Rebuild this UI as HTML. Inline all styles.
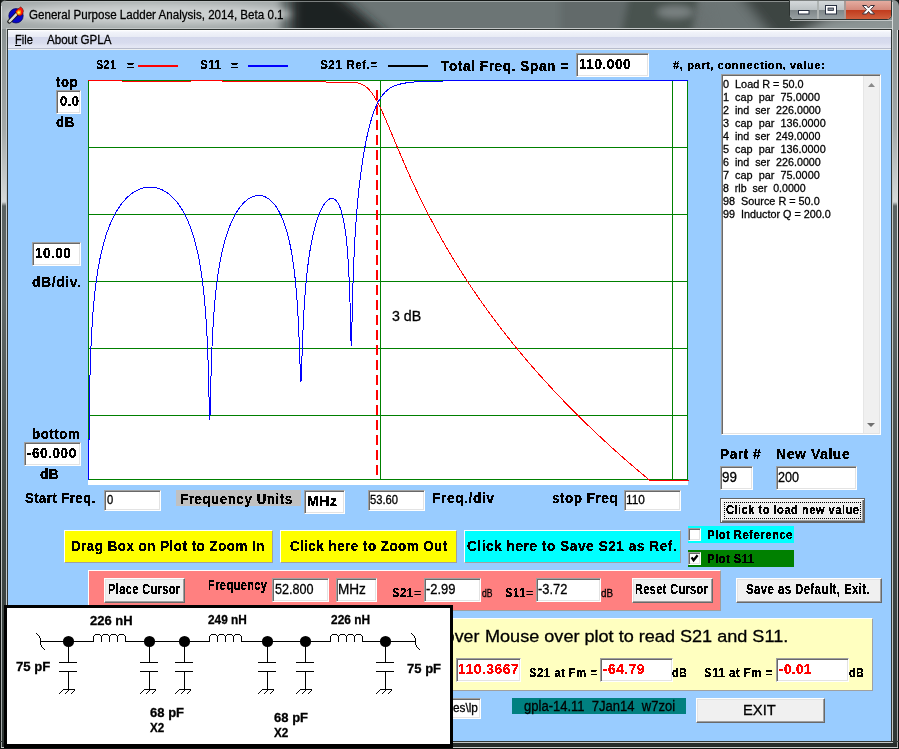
<!DOCTYPE html><html><head><meta charset="utf-8"><style>
html,body{margin:0;padding:0;}
body{width:899px;height:749px;position:relative;overflow:hidden;background:#1c2220;font-family:"Liberation Sans",sans-serif;}
.r{position:absolute;}
.t{position:absolute;white-space:pre;line-height:1;transform-origin:0 0;}
svg{position:absolute;left:0;top:0;}
.t{filter:url(#crisp);}
.t.rg{filter:none;-webkit-text-stroke:0.3px currentColor;}
</style></head><body>
<svg width="0" height="0" style="position:absolute"><filter id="crisp" x="-10%" y="-10%" width="120%" height="120%"><feComponentTransfer><feFuncA type="discrete" tableValues="0 1 1"/></feComponentTransfer></filter><filter id="crispr" x="-10%" y="-10%" width="120%" height="120%"><feComponentTransfer><feFuncA type="discrete" tableValues="0 1"/></feComponentTransfer></filter></svg>
<div class="r" style="left:0px;top:0px;width:899px;height:749px;background:linear-gradient(90deg,#3a4240 0px,#5a6262 20px,#6a7272 100%);border-radius:7px 7px 0 0;"></div>
<svg width="899" height="29" style="left:0;top:0">
<defs><filter id="gb" x="-20%" y="-100%" width="140%" height="300%"><feGaussianBlur stdDeviation="3.5"/></filter>
<filter id="gb2" x="-50%" y="-100%" width="200%" height="300%"><feGaussianBlur stdDeviation="6"/></filter>
<clipPath id="tc"><path d="M7 0 H892 A7 7 0 0 1 899 7 V29 H0 V7 A7 7 0 0 1 7 0 Z"/></clipPath></defs>
<g clip-path="url(#tc)">
<rect x="0" y="0" width="899" height="29" fill="#6a7272"/>
<g filter="url(#gb)">
<rect x="-20" y="-10" width="300" height="50" fill="#a4aaaa"/>
<ellipse cx="150" cy="14" rx="148" ry="10" fill="#ccd0d0"/>

<polygon points="328,-10 560,-10 560,40 392,40" fill="#6c7474"/>
<rect x="560" y="-10" width="70" height="50" fill="#626a6a"/>
<polygon points="630,-10 700,-10 690,40 620,40" fill="#4a5250"/>
<ellipse cx="675" cy="12" rx="18" ry="6" fill="#7a8282"/>
</g>
<g filter="url(#gb2)">
<polygon points="292,-10 332,-10 392,40 292,40" fill="#1e2420"/>
<polygon points="700,-10 735,-10 775,40 715,40" fill="#6c7474"/>
<polygon points="735,-10 899,-10 899,40 775,40" fill="#3c4442"/>
<polygon points="830,18 899,10 899,40 790,40" fill="#8e9696"/>
</g>
<rect x="0" y="0" width="899" height="1" fill="#141816"/>
<rect x="6" y="1" width="887" height="1" fill="#c8cccc" opacity="0.55"/>
</g>
</svg>
<div class="r" style="left:0px;top:0px;width:1px;height:749px;background:#101412;"></div>
<div class="r" style="left:1px;top:6px;width:1px;height:743px;background:linear-gradient(#e0e4e4,#d0d4d4 60%,#a0a4a4);"></div>
<div class="r" style="left:2px;top:29px;width:4px;height:714px;background:linear-gradient(#8a9292 0px,#a4aaaa 100px,#d4d8d8 171px,#d0d4d4 173px,#5a6262 177px,#606868 270px,#4c5452 400px,#2e3634 714px);"></div>
<div class="r" style="left:6px;top:28px;width:1px;height:714px;background:#c4c8c8;"></div>
<div class="r" style="left:7px;top:29px;width:1px;height:713px;background:#303634;"></div>
<div class="r" style="left:891px;top:29px;width:1px;height:713px;background:#303634;"></div>
<div class="r" style="left:892px;top:28px;width:1px;height:715px;background:#c4c8c8;"></div>
<div class="r" style="left:893px;top:29px;width:4px;height:714px;background:linear-gradient(#8a9292 0px,#a4aaaa 100px,#d4d8d8 171px,#d0d4d4 173px,#5a6262 177px,#606868 270px,#4c5452 400px,#2e3634 714px);"></div>
<div class="r" style="left:897px;top:6px;width:1px;height:743px;background:linear-gradient(#e0e4e4,#d0d4d4 60%,#a0a4a4);"></div>
<div class="r" style="left:898px;top:0px;width:1px;height:749px;background:#101412;"></div>
<div class="r" style="left:0px;top:741px;width:899px;height:1px;background:#303634;"></div>
<div class="r" style="left:6px;top:742px;width:887px;height:1px;background:#c4c8c8;"></div>
<div class="r" style="left:2px;top:743px;width:895px;height:4px;background:#262c2a;"></div>
<div class="r" style="left:1px;top:747px;width:897px;height:1px;background:#c8cccc;"></div>
<div class="r" style="left:0px;top:748px;width:899px;height:1px;background:#101412;"></div>
<div class="r" style="left:7px;top:28px;width:885px;height:1px;background:#c4c8c8;"></div>
<div class="r" style="left:8px;top:29px;width:883px;height:1px;background:#303634;"></div>
<svg width="899" height="30" style="left:0;top:0">
<circle cx="16" cy="15.8" r="7.2" fill="#0808c8" stroke="#000050" stroke-width="0.7"/>
<line x1="9.3" y1="21.6" x2="16.5" y2="14.2" stroke="#181818" stroke-width="4.2" stroke-linecap="round"/>
<line x1="9.6" y1="21.3" x2="16.5" y2="14.2" stroke="#d8d8d0" stroke-width="2.4" stroke-linecap="round"/>
<path d="M15.5 11.5 L17.5 9 L19.5 8 L20.5 6.8 L22.5 8.5 L23.5 11 L22.5 14.5 L20 16 L17.5 15 Z" fill="#ff1808" stroke="#401010" stroke-width="0.5"/>
<path d="M16.5 12 L18.5 10 L21 10.5 L21 13.5 L19 15 L17 14 Z" fill="#ff9000"/>
<path d="M17.3 12.5 L19 11 L20 12.5 L19 14 Z" fill="#ffff40"/>
</svg>
<div class="t rg" style="left:29.45px;top:8.00px;font-size:13.25px;font-weight:normal;color:#000;transform:scaleX(0.8749);">General Purpose Ladder Analysis, 2014, Beta 0.1</div>
<svg width="899" height="30" style="left:0;top:0">
<defs>
<linearGradient id="bg1" x1="0" y1="0" x2="0" y2="1"><stop offset="0" stop-color="#d4d8da"/><stop offset="0.48" stop-color="#bcc2c4"/><stop offset="0.5" stop-color="#7e8688"/><stop offset="1" stop-color="#98a0a2"/></linearGradient>
<linearGradient id="bg2" x1="0" y1="0" x2="0" y2="1"><stop offset="0" stop-color="#e4aca0"/><stop offset="0.48" stop-color="#d48a7c"/><stop offset="0.5" stop-color="#c03a1c"/><stop offset="1" stop-color="#d0603e"/></linearGradient>
</defs>
<path d="M892 0 H893 A6 6 0 0 1 899 6 V30 H892 Z" fill="#8e9696"/>
<rect x="892" y="2" width="1" height="28" fill="#d8dcdc"/>
<path d="M789.5 0.5 V15 A4.5 4.5 0 0 0 794 19.5 H887 A4.5 4.5 0 0 0 891.5 15 V0.5" fill="#e8ecec" stroke="#2c3230" stroke-width="1"/>
<path d="M790 1 V15 A4 4 0 0 0 794 19 H817 V1 Z" fill="url(#bg1)"/>
<path d="M819 1 V19 H844 V1 Z" fill="url(#bg1)"/>
<path d="M846 1 V19 H887 A4 4 0 0 0 891 15 V1 Z" fill="url(#bg2)"/>
<rect x="817.5" y="1" width="1" height="18" fill="#2c3230" opacity="0.6"/>
<rect x="844.5" y="1" width="1" height="18" fill="#4a2018" opacity="0.8"/>
<rect x="790" y="20" width="102" height="1" fill="#d8dcdc" opacity="0.7"/>
<rect x="798.5" y="10.5" width="10.5" height="3.5" fill="#fff" stroke="#283040" stroke-width="1"/>
<rect x="825.5" y="5.5" width="11" height="8.5" fill="#fff" stroke="#283040" stroke-width="1"/>
<rect x="828" y="8" width="5.5" height="2.5" fill="#8a929a" stroke="#283040" stroke-width="0.8"/>
<path d="M862.5 5.5 L866.5 5.5 L868.5 8 L870.5 5.5 L874.5 5.5 L870.5 9.7 L874.5 14 L870.5 14 L868.5 11.5 L866.5 14 L862.5 14 L866.5 9.7 Z" fill="#fff" stroke="#38303a" stroke-width="1"/>
</svg>
<div class="r" style="left:8px;top:30px;width:883px;height:18px;background:linear-gradient(#ffffff 0px,#fafbfd 1px,#f1f3fa 2px,#e9ecf5 6.5px,#d4d8ec 7px,#d8dcee 13px,#e2e5f3 16px,#e4e7f4 18px);"></div>
<div class="r" style="left:8px;top:48px;width:883px;height:1px;background:#b8bccc;"></div>
<div class="r" style="left:8px;top:49px;width:883px;height:1px;background:#eceff0;"></div>
<div class="t rg" style="left:14.63px;top:34.00px;font-size:12.72px;font-weight:normal;color:#000;transform:scaleX(0.8684);">File</div>
<div class="r" style="left:15px;top:45px;width:6px;height:1px;background:#000;"></div>
<div class="t rg" style="left:47.00px;top:34.00px;font-size:12.72px;font-weight:normal;color:#000;transform:scaleX(0.9101);">About GPLA</div>
<div class="r" style="left:8px;top:50px;width:883px;height:691px;background:#99ccff;"></div>
<svg width="899" height="749" style="left:0;top:0" shape-rendering="crispEdges">
<rect x="88" y="80" width="600" height="405" fill="#fff"/>
<rect x="88" y="80" width="600" height="1" fill="#008000"/>
<rect x="88" y="147" width="600" height="1" fill="#008000"/>
<rect x="88" y="214" width="600" height="1" fill="#008000"/>
<rect x="88" y="281" width="600" height="1" fill="#008000"/>
<rect x="88" y="348" width="600" height="1" fill="#008000"/>
<rect x="88" y="415" width="600" height="1" fill="#008000"/>
<rect x="88" y="479" width="600" height="1" fill="#008000"/>
<rect x="88" y="80" width="1" height="400" fill="#008000"/>
<rect x="380" y="80" width="1" height="400" fill="#008000"/>
<rect x="672" y="80" width="1" height="400" fill="#008000"/>
<rect x="687" y="80" width="1" height="400" fill="#008000"/>
<rect x="376" y="90" width="2" height="10" fill="#f00"/>
<rect x="376" y="105" width="2" height="10" fill="#f00"/>
<rect x="376" y="120" width="2" height="10" fill="#f00"/>
<rect x="376" y="135" width="2" height="10" fill="#f00"/>
<rect x="376" y="150" width="2" height="10" fill="#f00"/>
<rect x="376" y="165" width="2" height="10" fill="#f00"/>
<rect x="376" y="180" width="2" height="10" fill="#f00"/>
<rect x="376" y="195" width="2" height="10" fill="#f00"/>
<rect x="376" y="210" width="2" height="10" fill="#f00"/>
<rect x="376" y="225" width="2" height="10" fill="#f00"/>
<rect x="376" y="240" width="2" height="10" fill="#f00"/>
<rect x="376" y="255" width="2" height="10" fill="#f00"/>
<rect x="376" y="270" width="2" height="10" fill="#f00"/>
<rect x="376" y="285" width="2" height="10" fill="#f00"/>
<rect x="376" y="300" width="2" height="10" fill="#f00"/>
<rect x="376" y="315" width="2" height="10" fill="#f00"/>
<rect x="376" y="330" width="2" height="10" fill="#f00"/>
<rect x="376" y="345" width="2" height="10" fill="#f00"/>
<rect x="376" y="360" width="2" height="10" fill="#f00"/>
<rect x="376" y="375" width="2" height="10" fill="#f00"/>
<rect x="376" y="390" width="2" height="10" fill="#f00"/>
<rect x="376" y="405" width="2" height="10" fill="#f00"/>
<rect x="376" y="420" width="2" height="10" fill="#f00"/>
<rect x="376" y="435" width="2" height="10" fill="#f00"/>
<rect x="376" y="450" width="2" height="10" fill="#f00"/>
<rect x="376" y="465" width="2" height="10" fill="#f00"/>
<polyline points="88.50,80.50 95.70,80.54 103.20,80.63 133.40,81.23 140.70,81.34 147.50,81.40 155.20,81.42 163.20,81.38 171.60,81.29 195.10,80.94 202.70,80.89 209.90,80.88 222.50,81.01 245.80,81.47 255.80,81.60 262.00,81.63 268.30,81.62 290.40,81.37 299.40,81.34 304.50,81.40 309.60,81.50 325.60,82.01 331.60,82.14 337.10,82.17 346.50,82.07 349.80,82.08 352.30,82.17 354.50,82.36 356.50,82.64 358.30,83.03 360.00,83.54 361.60,84.17 363.10,84.91 364.60,85.83 365.50,86.47 366.40,87.17 367.30,87.96 368.20,88.81 369.10,89.75 370.00,90.76 370.80,91.73 371.70,92.90 372.50,94.01 373.40,95.32 375.20,98.19 377.10,101.52 379.00,105.14 380.60,108.38 382.30,111.98 384.10,115.95 386.10,120.51 389.60,128.72 399.80,153.05 403.00,160.54 406.00,167.43 408.60,173.30 411.20,179.06 413.80,184.72 416.40,190.27 419.90,197.57 423.40,204.68 427.00,211.82 430.60,218.77 434.30,225.73 438.10,232.70 441.90,239.50 445.80,246.30 449.70,252.95 453.70,259.60 457.70,266.09 461.80,272.60 466.00,279.12 470.20,285.49 474.60,292.02 479.00,298.41 483.50,304.80 488.00,311.06 492.70,317.46 497.40,323.73 502.20,330.00 507.10,336.28 512.10,342.55 517.10,348.71 524.20,357.24 531.50,365.78 539.00,374.33 546.60,382.77 554.40,391.21 562.30,399.55 570.40,407.88 578.60,416.11 587.00,424.34 595.50,432.47 604.20,440.60 613.00,448.63 622.00,456.66 631.10,464.59 640.40,472.52 649.90,480.44 650.00,480.50 688.50,480.50" fill="none" stroke="#f00" stroke-width="1"/>
<polyline points="88.50,480.50 88.70,480.50 89.10,428.69 89.30,412.03 89.60,393.60 89.90,379.64 90.20,368.40 90.60,356.18 91.00,346.10 91.50,335.56 92.10,325.03 92.80,314.78 93.50,306.09 94.30,297.55 95.20,289.27 96.20,281.31 97.30,273.70 97.90,269.96 98.60,265.89 99.30,262.11 100.00,258.57 100.70,255.26 101.50,251.72 102.30,248.40 103.20,244.92 104.10,241.66 105.00,238.60 105.90,235.73 106.90,232.73 107.90,229.92 108.90,227.27 110.00,224.54 111.10,221.97 112.20,219.56 113.40,217.09 114.60,214.77 115.90,212.42 117.20,210.22 118.50,208.17 119.80,206.25 121.20,204.32 122.60,202.52 124.00,200.85 125.50,199.20 127.00,197.67 128.50,196.26 130.10,194.88 131.70,193.64 133.30,192.51 135.30,191.26 136.30,190.70 137.40,190.13 139.40,189.23 140.40,188.84 141.50,188.46 142.50,188.15 143.60,187.85 144.60,187.63 145.70,187.42 146.70,187.27 147.80,187.16 148.90,187.08 150.00,187.06 151.10,187.07 152.10,187.13 153.20,187.24 154.20,187.37 155.30,187.56 156.30,187.78 157.40,188.06 158.40,188.36 159.50,188.74 160.50,189.12 162.50,190.02 164.50,191.08 166.50,192.33 168.40,193.69 170.30,195.23 172.20,196.96 174.00,198.79 175.80,200.82 177.50,202.92 179.20,205.24 180.80,207.62 182.40,210.21 183.90,212.86 185.40,215.74 186.80,218.65 188.20,221.81 189.50,224.99 190.80,228.43 192.00,231.88 193.10,235.28 194.10,238.61 195.10,242.19 196.00,245.65 196.90,249.38 197.80,253.40 198.60,257.25 199.40,261.41 200.20,265.93 200.90,270.21 201.60,274.86 202.20,279.19 202.80,283.87 203.40,288.99 203.90,293.64 204.40,298.70 204.90,304.24 205.30,309.10 206.10,320.23 206.80,332.04 207.40,344.40 207.90,356.97 208.40,372.47 208.70,383.58 209.30,409.06 209.50,416.25 209.60,418.68 209.70,419.98 209.80,419.98 209.90,418.70 210.10,412.98 210.90,379.76 211.20,369.13 211.60,357.02 212.00,346.77 212.40,337.96 212.90,328.48 213.40,320.29 214.00,311.76 214.70,303.17 215.40,295.70 216.20,288.21 217.10,280.83 218.00,274.31 219.00,267.89 220.00,262.14 220.60,258.98 221.30,255.51 222.60,249.64 224.00,244.01 224.70,241.43 225.50,238.64 226.30,236.01 227.20,233.23 228.00,230.90 228.90,228.43 229.80,226.10 230.70,223.91 231.60,221.83 232.60,219.67 233.60,217.63 234.60,215.72 235.60,213.92 236.70,212.07 237.80,210.34 238.90,208.73 240.00,207.23 241.10,205.83 242.20,204.54 243.40,203.24 244.60,202.05 245.80,200.97 247.00,199.99 248.20,199.11 249.40,198.33 250.70,197.59 252.00,196.97 253.40,196.42 254.70,196.02 256.10,195.72 257.50,195.54 258.80,195.48 260.20,195.55 261.50,195.73 262.80,196.03 264.10,196.44 265.40,196.98 266.70,197.64 268.00,198.43 269.20,199.28 270.40,200.25 271.60,201.36 272.80,202.59 273.90,203.85 275.00,205.24 276.10,206.76 277.20,208.43 278.30,210.25 279.30,212.05 280.30,214.00 281.30,216.12 282.20,218.17 283.10,220.38 284.00,222.75 284.90,225.31 285.70,227.75 286.50,230.37 287.30,233.19 288.00,235.83 288.70,238.65 289.40,241.67 290.00,244.44 291.20,250.54 292.30,256.93 293.30,263.56 294.20,270.37 295.10,278.20 295.90,286.26 296.50,293.18 297.10,301.06 297.70,310.15 298.20,318.93 298.70,329.10 299.20,341.00 300.40,374.96 300.60,379.10 300.70,380.50 300.80,381.34 300.90,381.56 301.00,381.16 301.10,380.15 301.20,378.60 301.40,374.22 302.50,342.42 302.90,332.37 303.30,323.50 303.70,315.64 304.20,306.98 304.70,299.36 305.20,292.58 305.80,285.34 306.50,277.87 307.30,270.38 308.10,263.76 309.00,257.15 309.90,251.26 310.90,245.41 312.00,239.68 312.60,236.81 313.30,233.68 314.60,228.40 315.30,225.81 316.10,223.05 316.80,220.79 317.60,218.38 318.40,216.14 319.20,214.06 320.00,212.12 320.80,210.33 321.60,208.68 322.50,206.98 323.30,205.60 324.20,204.20 325.00,203.08 325.90,201.96 326.80,201.00 327.70,200.19 328.60,199.53 329.40,199.07 330.30,198.71 331.10,198.52 331.60,198.47 332.00,198.47 332.80,198.57 333.60,198.82 334.40,199.22 335.20,199.78 335.90,200.42 336.70,201.32 337.40,202.28 338.20,203.58 339.00,205.12 339.70,206.69 340.40,208.49 341.10,210.55 341.70,212.54 342.30,214.77 342.90,217.27 343.50,220.07 344.00,222.66 344.50,225.54 345.00,228.72 345.50,232.27 345.90,235.41 346.40,239.78 346.80,243.69 347.50,251.62 348.10,259.86 348.70,269.92 349.20,280.24 349.60,290.24 350.00,302.31 350.30,313.01 351.00,340.75 351.10,343.50 351.20,345.25 351.30,345.77 351.40,344.98 351.50,342.93 351.60,339.86 352.50,301.05 352.80,290.00 353.20,277.28 353.60,266.39 354.10,254.70 354.60,244.61 355.10,235.72 355.70,226.29 356.40,216.58 357.20,206.79 358.00,198.07 358.90,189.28 359.90,180.51 360.90,172.59 362.00,164.69 363.20,156.89 364.50,149.25 365.90,141.84 367.30,135.17 368.00,132.08 368.80,128.75 369.50,126.00 370.30,123.02 371.00,120.56 371.80,117.90 372.60,115.41 373.40,113.07 374.20,110.88 375.00,108.82 375.80,106.90 376.70,104.89 377.60,103.02 378.50,101.30 379.40,99.71 380.30,98.24 381.20,96.89 382.20,95.51 383.20,94.25 384.30,93.00 385.40,91.87 386.50,90.85 387.60,89.93 388.80,89.03 390.30,88.04 391.80,87.18 393.50,86.34 395.20,85.63 397.00,84.98 399.00,84.38 401.10,83.85 403.30,83.39 405.70,82.97 408.30,82.61 411.10,82.29 414.10,82.02 417.40,81.79 421.10,81.58 425.20,81.41 429.70,81.26 439.40,81.05 451.70,80.89 467.90,80.78 489.60,80.70 560.30,80.59 688.50,80.54" fill="none" stroke="#00f" stroke-width="1"/>
</svg>
<div class="t rg" style="left:391.50px;top:309.00px;font-size:14.31px;font-weight:normal;color:#000;transform:scaleX(0.9929);">3 dB</div>
<div class="t" style="left:96.38px;top:59.00px;font-size:12.72px;font-weight:bold;color:#000;transform:scaleX(0.8427);letter-spacing:0.51px;">S21</div>
<div class="t" style="left:126.52px;top:60.00px;font-size:12.72px;font-weight:bold;color:#000;transform:scaleX(0.9569);letter-spacing:0.51px;">=</div>
<div class="r" style="left:138px;top:65px;width:40px;height:2px;background:#f00;"></div>
<div class="t" style="left:200.26px;top:59.00px;font-size:12.72px;font-weight:bold;color:#000;transform:scaleX(0.9160);letter-spacing:0.51px;">S11</div>
<div class="t" style="left:230.53px;top:60.00px;font-size:12.72px;font-weight:bold;color:#000;transform:scaleX(0.9412);letter-spacing:0.51px;">=</div>
<div class="r" style="left:248px;top:65px;width:40px;height:2px;background:#00f;"></div>
<div class="t" style="left:320.45px;top:59.00px;font-size:12.72px;font-weight:bold;color:#000;transform:scaleX(0.9269);letter-spacing:0.51px;">S21 Ref.=</div>
<div class="r" style="left:388px;top:65px;width:40px;height:2px;background:#000;"></div>
<div class="t" style="left:440.88px;top:59.00px;font-size:14.31px;font-weight:bold;color:#000;transform:scaleX(0.9574);letter-spacing:0.57px;">Total Freq. Span =</div>
<div class="r" style="left:576px;top:53px;width:73px;height:24px;background:#fff;border-top:1px solid #a0a0a0;border-left:1px solid #a0a0a0;border-right:1px solid #fff;border-bottom:1px solid #fff;box-sizing:border-box;box-shadow:inset 1px 1px 0 #696969, inset -1px -1px 0 #e3e3e3;"></div>
<div class="t" style="left:579.17px;top:57.00px;font-size:14.31px;font-weight:bold;color:#000;transform:scaleX(0.9493);letter-spacing:0.57px;">110.000</div>
<div class="t" style="left:672.88px;top:59.00px;font-size:11.66px;font-weight:bold;color:#000;transform:scaleX(0.9731);letter-spacing:0.47px;">#, part, connection, value:</div>
<div class="t" style="left:56.29px;top:75.00px;font-size:14.31px;font-weight:bold;color:#000;transform:scaleX(0.9187);letter-spacing:0.57px;">top</div>
<div class="r" style="left:56px;top:90px;width:25px;height:24px;background:#fff;border-top:1px solid #a0a0a0;border-left:1px solid #a0a0a0;border-right:1px solid #fff;border-bottom:1px solid #fff;box-sizing:border-box;box-shadow:inset 1px 1px 0 #696969, inset -1px -1px 0 #e3e3e3;"></div>
<div class="t" style="left:59.55px;top:94.00px;font-size:14.31px;font-weight:bold;color:#000;transform:scaleX(0.9050);letter-spacing:0.57px;">0.0</div>
<div class="t" style="left:56.42px;top:115.00px;font-size:14.31px;font-weight:bold;color:#000;transform:scaleX(0.9279);letter-spacing:0.57px;">dB</div>
<div class="r" style="left:32px;top:242px;width:49px;height:24px;background:#fff;border-top:1px solid #a0a0a0;border-left:1px solid #a0a0a0;border-right:1px solid #fff;border-bottom:1px solid #fff;box-sizing:border-box;box-shadow:inset 1px 1px 0 #696969, inset -1px -1px 0 #e3e3e3;"></div>
<div class="t" style="left:34.78px;top:246.00px;font-size:14.31px;font-weight:bold;color:#000;transform:scaleX(0.9417);letter-spacing:0.57px;">10.00</div>
<div class="t" style="left:32.19px;top:275.00px;font-size:14.31px;font-weight:bold;color:#000;transform:scaleX(0.9773);letter-spacing:0.57px;">dB/div.</div>
<div class="t" style="left:31.58px;top:427.00px;font-size:14.31px;font-weight:bold;color:#000;transform:scaleX(0.9321);letter-spacing:0.57px;">bottom</div>
<div class="r" style="left:24px;top:442px;width:57px;height:24px;background:#fff;border-top:1px solid #a0a0a0;border-left:1px solid #a0a0a0;border-right:1px solid #fff;border-bottom:1px solid #fff;box-sizing:border-box;box-shadow:inset 1px 1px 0 #696969, inset -1px -1px 0 #e3e3e3;"></div>
<div class="t" style="left:26.53px;top:446.00px;font-size:14.31px;font-weight:bold;color:#000;transform:scaleX(0.9473);letter-spacing:0.57px;">-60.000</div>
<div class="t" style="left:40.41px;top:467.00px;font-size:14.31px;font-weight:bold;color:#000;transform:scaleX(0.9498);letter-spacing:0.57px;">dB</div>
<div class="t" style="left:24.66px;top:491.00px;font-size:14.31px;font-weight:bold;color:#000;transform:scaleX(0.9104);letter-spacing:0.57px;">Start Freq.</div>
<div class="r" style="left:104px;top:490px;width:57px;height:21px;background:#fff;border-top:1px solid #a0a0a0;border-left:1px solid #a0a0a0;border-right:1px solid #fff;border-bottom:1px solid #fff;box-sizing:border-box;box-shadow:inset 1px 1px 0 #696969, inset -1px -1px 0 #e3e3e3;"></div>
<div class="t rg" style="left:107.34px;top:494.00px;font-size:12.19px;font-weight:normal;color:#000;transform:scaleX(0.9191);">0</div>
<div class="r" style="left:176px;top:490px;width:125px;height:16px;background:#c0c0c0;"></div>
<div class="t" style="left:179.67px;top:492.00px;font-size:14.31px;font-weight:bold;color:#000;transform:scaleX(0.9348);letter-spacing:0.57px;">Frequency Units</div>
<div class="r" style="left:304px;top:490px;width:41px;height:24px;background:#fff;border-top:1px solid #a0a0a0;border-left:1px solid #a0a0a0;border-right:1px solid #fff;border-bottom:1px solid #fff;box-sizing:border-box;box-shadow:inset 1px 1px 0 #696969, inset -1px -1px 0 #e3e3e3;"></div>
<div class="t" style="left:306.72px;top:494.00px;font-size:14.31px;font-weight:bold;color:#000;transform:scaleX(0.9830);letter-spacing:0.57px;">MHz</div>
<div class="r" style="left:368px;top:490px;width:57px;height:21px;background:#fff;border-top:1px solid #a0a0a0;border-left:1px solid #a0a0a0;border-right:1px solid #fff;border-bottom:1px solid #fff;box-sizing:border-box;box-shadow:inset 1px 1px 0 #696969, inset -1px -1px 0 #e3e3e3;"></div>
<div class="t rg" style="left:370.14px;top:494.00px;font-size:12.19px;font-weight:normal;color:#000;transform:scaleX(0.9210);">53.60</div>
<div class="t" style="left:431.53px;top:491.00px;font-size:14.31px;font-weight:bold;color:#000;transform:scaleX(0.9661);letter-spacing:0.57px;">Freq./div</div>
<div class="t" style="left:552.23px;top:491.00px;font-size:14.31px;font-weight:bold;color:#000;transform:scaleX(0.9418);letter-spacing:0.57px;">stop Freq</div>
<div class="r" style="left:624px;top:490px;width:57px;height:21px;background:#fff;border-top:1px solid #a0a0a0;border-left:1px solid #a0a0a0;border-right:1px solid #fff;border-bottom:1px solid #fff;box-sizing:border-box;box-shadow:inset 1px 1px 0 #696969, inset -1px -1px 0 #e3e3e3;"></div>
<div class="t rg" style="left:626.45px;top:494.00px;font-size:12.19px;font-weight:normal;color:#000;transform:scaleX(0.9699);">110</div>
<div class="r" style="left:64px;top:530px;width:209px;height:33px;background:#ffff00;box-sizing:border-box;border-top:1px solid #fff;border-left:1px solid #fff;border-right:1px solid #a0a0a0;border-bottom:1px solid #a0a0a0;"></div>
<div class="t" style="left:71.47px;top:539.00px;font-size:14.31px;font-weight:bold;color:#000;transform:scaleX(0.9307);letter-spacing:0.57px;">Drag Box on Plot to Zoom In</div>
<div class="r" style="left:280px;top:530px;width:177px;height:33px;background:#ffff00;box-sizing:border-box;border-top:1px solid #fff;border-left:1px solid #fff;border-right:1px solid #a0a0a0;border-bottom:1px solid #a0a0a0;"></div>
<div class="t" style="left:289.92px;top:539.00px;font-size:14.31px;font-weight:bold;color:#000;transform:scaleX(0.9287);letter-spacing:0.57px;">Click here to Zoom Out</div>
<div class="r" style="left:464px;top:530px;width:217px;height:33px;background:#00ffff;box-sizing:border-box;border-top:1px solid #fff;border-left:1px solid #fff;border-right:1px solid #a0a0a0;border-bottom:1px solid #a0a0a0;"></div>
<div class="t" style="left:466.80px;top:539.00px;font-size:14.31px;font-weight:bold;color:#000;transform:scaleX(0.9533);letter-spacing:0.57px;">Click here to Save S21 as Ref.</div>
<div class="r" style="left:688px;top:526px;width:106px;height:17px;background:#00ffff;"></div>
<div class="r" style="left:688px;top:528px;width:13px;height:13px;background:#fff;border-top:1px solid #a0a0a0;border-left:1px solid #a0a0a0;border-right:1px solid #fff;border-bottom:1px solid #fff;box-sizing:border-box;box-shadow:inset 1px 1px 0 #696969, inset -1px -1px 0 #e3e3e3;"></div>
<div class="t" style="left:707.05px;top:528.00px;font-size:13.25px;font-weight:bold;color:#000;transform:scaleX(0.8569);letter-spacing:0.53px;">Plot Reference</div>
<div class="r" style="left:688px;top:550px;width:106px;height:17px;background:#008000;"></div>
<div class="r" style="left:688px;top:552px;width:13px;height:13px;background:#fff;border-top:1px solid #a0a0a0;border-left:1px solid #a0a0a0;border-right:1px solid #fff;border-bottom:1px solid #fff;box-sizing:border-box;box-shadow:inset 1px 1px 0 #696969, inset -1px -1px 0 #e3e3e3;"></div>
<svg width="899" height="749" style="left:0;top:0"><path d="M691.6 557.3 L693.6 560.3 L697.6 555.2" fill="none" stroke="#000" stroke-width="2.3"/></svg>
<div class="t" style="left:707.06px;top:552.00px;font-size:13.25px;font-weight:bold;color:#000;transform:scaleX(0.8506);letter-spacing:0.53px;">Plot S11</div>
<div class="r" style="left:721px;top:74px;width:160px;height:361px;background:#fff;border-top:1px solid #a0a0a0;border-left:1px solid #a0a0a0;border-right:1px solid #fff;border-bottom:1px solid #fff;box-sizing:border-box;box-shadow:inset 1px 1px 0 #696969, inset -1px -1px 0 #e3e3e3;"></div>
<div class="r" style="left:863px;top:76px;width:16px;height:357px;background:#f0f0f0;box-shadow:inset 1px 0 0 #e6e6e6;"></div>
<svg width="899" height="749" style="left:0;top:0"><path d="M868 87 L871.5 83 L875 87 Z" fill="#8a8a8a"/><path d="M867 423 L871 427 L875 423 Z" fill="#707070"/></svg>
<div class="t rg" style="left:723.13px;top:78.00px;font-size:11.66px;font-weight:normal;color:#000;transform:scaleX(0.9312);">0  Load R = 50.0</div>
<div class="t rg" style="left:722.78px;top:91.00px;font-size:11.66px;font-weight:normal;color:#000;transform:scaleX(0.9351);">1  cap  par  75.0000</div>
<div class="t rg" style="left:723.02px;top:104.00px;font-size:11.66px;font-weight:normal;color:#000;transform:scaleX(0.9201);">2  ind  ser  226.0000</div>
<div class="t rg" style="left:723.13px;top:117.00px;font-size:11.66px;font-weight:normal;color:#000;transform:scaleX(0.9323);">3  cap  par  136.0000</div>
<div class="t rg" style="left:723.37px;top:130.00px;font-size:11.66px;font-weight:normal;color:#000;transform:scaleX(0.9169);">4  ind  ser  249.0000</div>
<div class="t rg" style="left:723.13px;top:143.00px;font-size:11.66px;font-weight:normal;color:#000;transform:scaleX(0.9323);">5  cap  par  136.0000</div>
<div class="t rg" style="left:723.02px;top:156.00px;font-size:11.66px;font-weight:normal;color:#000;transform:scaleX(0.9201);">6  ind  ser  226.0000</div>
<div class="t rg" style="left:723.02px;top:169.00px;font-size:11.66px;font-weight:normal;color:#000;transform:scaleX(0.9328);">7  cap  par  75.0000</div>
<div class="t rg" style="left:723.14px;top:182.00px;font-size:11.66px;font-weight:normal;color:#000;transform:scaleX(0.9106);">8  rlb  ser  0.0000</div>
<div class="t rg" style="left:723.14px;top:195.00px;font-size:11.66px;font-weight:normal;color:#000;transform:scaleX(0.9294);">98  Source R = 50.0</div>
<div class="t rg" style="left:723.14px;top:208.00px;font-size:11.66px;font-weight:normal;color:#000;transform:scaleX(0.9261);">99  Inductor Q = 200.0</div>
<div class="t" style="left:719.53px;top:448.00px;font-size:13.78px;font-weight:bold;color:#000;transform:scaleX(0.9900);letter-spacing:0.55px;">Part #</div>
<div class="t" style="left:775.71px;top:448.00px;font-size:13.78px;font-weight:bold;color:#000;transform:scaleX(1.0176);letter-spacing:0.55px;">New Value</div>
<div class="r" style="left:720px;top:466px;width:33px;height:24px;background:#fff;border-top:1px solid #a0a0a0;border-left:1px solid #a0a0a0;border-right:1px solid #fff;border-bottom:1px solid #fff;box-sizing:border-box;box-shadow:inset 1px 1px 0 #696969, inset -1px -1px 0 #e3e3e3;"></div>
<div class="t rg" style="left:722.29px;top:471.00px;font-size:13.78px;font-weight:normal;color:#000;transform:scaleX(0.9714);">99</div>
<div class="r" style="left:776px;top:466px;width:81px;height:24px;background:#fff;border-top:1px solid #a0a0a0;border-left:1px solid #a0a0a0;border-right:1px solid #fff;border-bottom:1px solid #fff;box-sizing:border-box;box-shadow:inset 1px 1px 0 #696969, inset -1px -1px 0 #e3e3e3;"></div>
<div class="t rg" style="left:778.43px;top:471.00px;font-size:13.78px;font-weight:normal;color:#000;transform:scaleX(0.9149);">200</div>
<div class="r" style="left:720px;top:498px;width:145px;height:25px;background:#f0f0f0;box-sizing:border-box;border:1px solid #646464;box-shadow:inset 1px 1px 0 #fff, inset -1px -1px 0 #646464, inset -2px -2px 0 #a0a0a0;"></div>
<div class="r" style="left:724px;top:502px;width:137px;height:17px;box-sizing:border-box;border:1px dotted #000;"></div>
<div class="t" style="left:725.56px;top:504.00px;font-size:12.72px;font-weight:bold;color:#000;transform:scaleX(0.8798);letter-spacing:0.51px;">Click to load new value</div>
<div class="r" style="left:88px;top:570px;width:633px;height:41px;background:#ff8080;box-sizing:border-box;border-top:1px solid #fff;border-left:1px solid #fff;border-bottom:1px solid #a0a0a0;border-right:1px solid #a0a0a0;"></div>
<div class="r" style="left:104px;top:578px;width:81px;height:25px;background:#f0f0f0;box-sizing:border-box;border-top:1px solid #fff;border-left:1px solid #fff;border-right:1px solid #696969;border-bottom:1px solid #696969;box-shadow:inset -1px -1px 0 #a0a0a0, inset 1px 1px 0 #e3e3e3;"></div>
<div class="t" style="left:108.02px;top:582.00px;font-size:13.99px;font-weight:bold;color:#000;transform:scaleX(0.7800);letter-spacing:0.56px;">Place Cursor</div>
<div class="t" style="left:208.31px;top:578.00px;font-size:13.99px;font-weight:bold;color:#000;transform:scaleX(0.7841);letter-spacing:0.56px;">Frequency</div>
<div class="r" style="left:272px;top:578px;width:57px;height:24px;background:#fff;border-top:1px solid #a0a0a0;border-left:1px solid #a0a0a0;border-right:1px solid #fff;border-bottom:1px solid #fff;box-sizing:border-box;box-shadow:inset 1px 1px 0 #696969, inset -1px -1px 0 #e3e3e3;"></div>
<div class="t rg" style="left:274.75px;top:582.00px;font-size:14.31px;font-weight:normal;color:#000;transform:scaleX(0.8826);">52.800</div>
<div class="r" style="left:336px;top:578px;width:41px;height:24px;background:#fff;border-top:1px solid #a0a0a0;border-left:1px solid #a0a0a0;border-right:1px solid #fff;border-bottom:1px solid #fff;box-sizing:border-box;box-shadow:inset 1px 1px 0 #696969, inset -1px -1px 0 #e3e3e3;"></div>
<div class="t rg" style="left:337.93px;top:582.00px;font-size:14.31px;font-weight:normal;color:#000;transform:scaleX(0.9498);">MHz</div>
<div class="t" style="left:392.46px;top:587.00px;font-size:12.72px;font-weight:bold;color:#000;transform:scaleX(0.8949);letter-spacing:0.51px;">S21</div>
<div class="t rg" style="left:414.09px;top:587.00px;font-size:12.72px;font-weight:normal;color:#000;transform:scaleX(0.9760);">=</div>
<div class="r" style="left:424px;top:578px;width:57px;height:24px;background:#fff;border-top:1px solid #a0a0a0;border-left:1px solid #a0a0a0;border-right:1px solid #fff;border-bottom:1px solid #fff;box-sizing:border-box;box-shadow:inset 1px 1px 0 #696969, inset -1px -1px 0 #e3e3e3;"></div>
<div class="t rg" style="left:425.93px;top:582.00px;font-size:14.31px;font-weight:normal;color:#000;transform:scaleX(0.9060);">-2.99</div>
<div class="t rg" style="left:481.63px;top:587.00px;font-size:11.66px;font-weight:normal;color:#000;transform:scaleX(0.7390);">dB</div>
<div class="t" style="left:505.16px;top:587.00px;font-size:12.72px;font-weight:bold;color:#000;transform:scaleX(0.8981);letter-spacing:0.51px;">S11</div>
<div class="t rg" style="left:526.18px;top:587.00px;font-size:12.72px;font-weight:normal;color:#000;transform:scaleX(0.9920);">=</div>
<div class="r" style="left:536px;top:578px;width:65px;height:24px;background:#fff;border-top:1px solid #a0a0a0;border-left:1px solid #a0a0a0;border-right:1px solid #fff;border-bottom:1px solid #fff;box-sizing:border-box;box-shadow:inset 1px 1px 0 #696969, inset -1px -1px 0 #e3e3e3;"></div>
<div class="t rg" style="left:537.84px;top:582.00px;font-size:14.31px;font-weight:normal;color:#000;transform:scaleX(0.8996);">-3.72</div>
<div class="t rg" style="left:601.08px;top:587.00px;font-size:11.66px;font-weight:normal;color:#000;transform:scaleX(0.8457);">dB</div>
<div class="r" style="left:632px;top:578px;width:81px;height:25px;background:#f0f0f0;box-sizing:border-box;border-top:1px solid #fff;border-left:1px solid #fff;border-right:1px solid #696969;border-bottom:1px solid #696969;box-shadow:inset -1px -1px 0 #a0a0a0, inset 1px 1px 0 #e3e3e3;"></div>
<div class="t" style="left:635.12px;top:582.00px;font-size:13.99px;font-weight:bold;color:#000;transform:scaleX(0.7750);letter-spacing:0.56px;">Reset Cursor</div>
<div class="r" style="left:736px;top:578px;width:146px;height:25px;background:#f0f0f0;box-sizing:border-box;border-top:1px solid #fff;border-left:1px solid #fff;border-right:1px solid #696969;border-bottom:1px solid #696969;box-shadow:inset -1px -1px 0 #a0a0a0, inset 1px 1px 0 #e3e3e3;"></div>
<div class="t" style="left:746.20px;top:582.00px;font-size:13.99px;font-weight:bold;color:#000;transform:scaleX(0.8118);letter-spacing:0.56px;">Save as Default, Exit.</div>
<div class="r" style="left:300px;top:618px;width:573px;height:73px;background:#ffffc0;box-sizing:border-box;border-top:1px solid #fff;border-right:1px solid #a0a0a0;border-bottom:1px solid #a0a0a0;"></div>
<div class="t rg" style="left:431.60px;top:629.00px;font-size:15.9px;font-weight:normal;color:#000;transform:scaleX(1.1166);">Hover</div>
<div class="t rg" style="left:484.78px;top:629.00px;font-size:15.9px;font-weight:normal;color:#000;transform:scaleX(1.1378);">Mouse over plot to read S21 and S11.</div>
<div class="r" style="left:456px;top:658px;width:65px;height:24px;background:#fff;border-top:1px solid #a0a0a0;border-left:1px solid #a0a0a0;border-right:1px solid #fff;border-bottom:1px solid #fff;box-sizing:border-box;box-shadow:inset 1px 1px 0 #696969, inset -1px -1px 0 #e3e3e3;"></div>
<div class="t" style="left:458.16px;top:662.00px;font-size:14.31px;font-weight:bold;color:#f00;transform:scaleX(0.9654);letter-spacing:0.57px;">110.3667</div>
<div class="t" style="left:528.58px;top:666.00px;font-size:13.25px;font-weight:bold;color:#000;transform:scaleX(0.8556);letter-spacing:0.53px;">S21 at Fm =</div>
<div class="r" style="left:600px;top:658px;width:73px;height:24px;background:#fff;border-top:1px solid #a0a0a0;border-left:1px solid #a0a0a0;border-right:1px solid #fff;border-bottom:1px solid #fff;box-sizing:border-box;box-shadow:inset 1px 1px 0 #696969, inset -1px -1px 0 #e3e3e3;"></div>
<div class="t" style="left:602.52px;top:662.00px;font-size:14.31px;font-weight:bold;color:#f00;transform:scaleX(0.9544);letter-spacing:0.57px;">-64.79</div>
<div class="t" style="left:672.09px;top:666.00px;font-size:13.25px;font-weight:bold;color:#000;transform:scaleX(0.8219);letter-spacing:0.53px;">dB</div>
<div class="t" style="left:704.07px;top:666.00px;font-size:13.25px;font-weight:bold;color:#000;transform:scaleX(0.8703);letter-spacing:0.53px;">S11 at Fm =</div>
<div class="r" style="left:776px;top:658px;width:73px;height:24px;background:#fff;border-top:1px solid #a0a0a0;border-left:1px solid #a0a0a0;border-right:1px solid #fff;border-bottom:1px solid #fff;box-sizing:border-box;box-shadow:inset 1px 1px 0 #696969, inset -1px -1px 0 #e3e3e3;"></div>
<div class="t" style="left:778.54px;top:662.00px;font-size:14.31px;font-weight:bold;color:#f00;transform:scaleX(0.9207);letter-spacing:0.57px;">-0.01</div>
<div class="t" style="left:848.59px;top:666.00px;font-size:13.25px;font-weight:bold;color:#000;transform:scaleX(0.8103);letter-spacing:0.53px;">dB</div>
<div class="r" style="left:400px;top:698px;width:81px;height:21px;background:#fff;border-top:1px solid #a0a0a0;border-left:1px solid #a0a0a0;border-right:1px solid #fff;border-bottom:1px solid #fff;box-sizing:border-box;box-shadow:inset 1px 1px 0 #696969, inset -1px -1px 0 #e3e3e3;"></div>
<div class="t rg" style="left:453.02px;top:702.00px;font-size:12.19px;font-weight:normal;color:#000;transform:scaleX(0.9688);">es\lp</div>
<div class="r" style="left:512px;top:698px;width:174px;height:16px;background:#008080;"></div>
<div class="t rg" style="left:523.91px;top:700.00px;font-size:13.78px;font-weight:normal;color:#000;transform:scaleX(0.9462);">gpla-14.11  7Jan14  w7zoi</div>
<div class="r" style="left:696px;top:698px;width:129px;height:25px;background:#f0f0f0;box-sizing:border-box;border-top:1px solid #fff;border-left:1px solid #fff;border-right:1px solid #696969;border-bottom:1px solid #696969;box-shadow:inset -1px -1px 0 #a0a0a0, inset 1px 1px 0 #e3e3e3;"></div>
<div class="t rg" style="left:742.64px;top:703.00px;font-size:14.31px;font-weight:normal;color:#000;transform:scaleX(1.0314);">EXIT</div>
<div class="r" style="left:4px;top:605px;width:449px;height:143px;background:#fff;box-sizing:border-box;border:3px solid #000;border-bottom:4px solid #000;"></div>
<svg width="899" height="749" style="left:0;top:0" shape-rendering="crispEdges">
<rect x="40" y="641" width="375" height="1" fill="#000"/>
<rect x="36" y="633" width="1" height="1" fill="#000"/>
<rect x="37" y="634" width="1" height="1" fill="#000"/>
<rect x="38" y="635" width="1" height="1" fill="#000"/>
<rect x="39" y="636" width="1" height="1" fill="#000"/>
<rect x="39" y="637" width="1" height="1" fill="#000"/>
<rect x="41" y="645" width="1" height="1" fill="#000"/>
<rect x="41" y="646" width="1" height="1" fill="#000"/>
<rect x="42" y="647" width="1" height="1" fill="#000"/>
<rect x="43" y="648" width="1" height="1" fill="#000"/>
<rect x="44" y="649" width="1" height="1" fill="#000"/>
<rect x="40" y="638" width="1" height="7" fill="#000"/>
<rect x="411" y="633" width="1" height="1" fill="#000"/>
<rect x="412" y="634" width="1" height="1" fill="#000"/>
<rect x="413" y="635" width="1" height="1" fill="#000"/>
<rect x="414" y="636" width="1" height="1" fill="#000"/>
<rect x="414" y="637" width="1" height="1" fill="#000"/>
<rect x="416" y="645" width="1" height="1" fill="#000"/>
<rect x="416" y="646" width="1" height="1" fill="#000"/>
<rect x="417" y="647" width="1" height="1" fill="#000"/>
<rect x="418" y="648" width="1" height="1" fill="#000"/>
<rect x="419" y="649" width="1" height="1" fill="#000"/>
<rect x="415" y="638" width="1" height="7" fill="#000"/>
<rect x="93" y="641" width="33" height="1" fill="#fff"/>
<rect x="93" y="636" width="1" height="6" fill="#000"/>
<rect x="94" y="635" width="1" height="1" fill="#000"/>
<rect x="95" y="634" width="5" height="1" fill="#000"/>
<rect x="100" y="635" width="1" height="1" fill="#000"/>
<rect x="101" y="636" width="1" height="6" fill="#000"/>
<rect x="102" y="635" width="1" height="1" fill="#000"/>
<rect x="103" y="634" width="5" height="1" fill="#000"/>
<rect x="108" y="635" width="1" height="1" fill="#000"/>
<rect x="109" y="636" width="1" height="6" fill="#000"/>
<rect x="110" y="635" width="1" height="1" fill="#000"/>
<rect x="111" y="634" width="5" height="1" fill="#000"/>
<rect x="116" y="635" width="1" height="1" fill="#000"/>
<rect x="117" y="636" width="1" height="6" fill="#000"/>
<rect x="118" y="635" width="1" height="1" fill="#000"/>
<rect x="119" y="634" width="5" height="1" fill="#000"/>
<rect x="124" y="635" width="1" height="1" fill="#000"/>
<rect x="125" y="636" width="1" height="6" fill="#000"/>
<rect x="209" y="641" width="33" height="1" fill="#fff"/>
<rect x="209" y="636" width="1" height="6" fill="#000"/>
<rect x="210" y="635" width="1" height="1" fill="#000"/>
<rect x="211" y="634" width="5" height="1" fill="#000"/>
<rect x="216" y="635" width="1" height="1" fill="#000"/>
<rect x="217" y="636" width="1" height="6" fill="#000"/>
<rect x="218" y="635" width="1" height="1" fill="#000"/>
<rect x="219" y="634" width="5" height="1" fill="#000"/>
<rect x="224" y="635" width="1" height="1" fill="#000"/>
<rect x="225" y="636" width="1" height="6" fill="#000"/>
<rect x="226" y="635" width="1" height="1" fill="#000"/>
<rect x="227" y="634" width="5" height="1" fill="#000"/>
<rect x="232" y="635" width="1" height="1" fill="#000"/>
<rect x="233" y="636" width="1" height="6" fill="#000"/>
<rect x="234" y="635" width="1" height="1" fill="#000"/>
<rect x="235" y="634" width="5" height="1" fill="#000"/>
<rect x="240" y="635" width="1" height="1" fill="#000"/>
<rect x="241" y="636" width="1" height="6" fill="#000"/>
<rect x="330" y="641" width="33" height="1" fill="#fff"/>
<rect x="330" y="636" width="1" height="6" fill="#000"/>
<rect x="331" y="635" width="1" height="1" fill="#000"/>
<rect x="332" y="634" width="5" height="1" fill="#000"/>
<rect x="337" y="635" width="1" height="1" fill="#000"/>
<rect x="338" y="636" width="1" height="6" fill="#000"/>
<rect x="339" y="635" width="1" height="1" fill="#000"/>
<rect x="340" y="634" width="5" height="1" fill="#000"/>
<rect x="345" y="635" width="1" height="1" fill="#000"/>
<rect x="346" y="636" width="1" height="6" fill="#000"/>
<rect x="347" y="635" width="1" height="1" fill="#000"/>
<rect x="348" y="634" width="5" height="1" fill="#000"/>
<rect x="353" y="635" width="1" height="1" fill="#000"/>
<rect x="354" y="636" width="1" height="6" fill="#000"/>
<rect x="355" y="635" width="1" height="1" fill="#000"/>
<rect x="356" y="634" width="5" height="1" fill="#000"/>
<rect x="361" y="635" width="1" height="1" fill="#000"/>
<rect x="362" y="636" width="1" height="6" fill="#000"/>
<circle cx="68.5" cy="641.5" r="5.6" fill="#000" shape-rendering="auto"/>
<rect x="68" y="641" width="1" height="21" fill="#000"/>
<rect x="59" y="662" width="18" height="1" fill="#000"/>
<rect x="59" y="671" width="18" height="1" fill="#000"/>
<rect x="68" y="671" width="1" height="18" fill="#000"/>
<rect x="63" y="689" width="12" height="1" fill="#000"/>
<rect x="62" y="690" width="1" height="1" fill="#000"/>
<rect x="61" y="691" width="1" height="1" fill="#000"/>
<rect x="60" y="692" width="1" height="1" fill="#000"/>
<rect x="59" y="693" width="1" height="1" fill="#000"/>
<rect x="68" y="690" width="1" height="1" fill="#000"/>
<rect x="67" y="691" width="1" height="1" fill="#000"/>
<rect x="66" y="692" width="1" height="1" fill="#000"/>
<rect x="65" y="693" width="1" height="1" fill="#000"/>
<rect x="74" y="690" width="1" height="1" fill="#000"/>
<rect x="73" y="691" width="1" height="1" fill="#000"/>
<rect x="72" y="692" width="1" height="1" fill="#000"/>
<rect x="71" y="693" width="1" height="1" fill="#000"/>
<circle cx="149.5" cy="641.5" r="5.6" fill="#000" shape-rendering="auto"/>
<rect x="149" y="641" width="1" height="21" fill="#000"/>
<rect x="140" y="662" width="18" height="1" fill="#000"/>
<rect x="140" y="671" width="18" height="1" fill="#000"/>
<rect x="149" y="671" width="1" height="18" fill="#000"/>
<rect x="144" y="689" width="12" height="1" fill="#000"/>
<rect x="143" y="690" width="1" height="1" fill="#000"/>
<rect x="142" y="691" width="1" height="1" fill="#000"/>
<rect x="141" y="692" width="1" height="1" fill="#000"/>
<rect x="140" y="693" width="1" height="1" fill="#000"/>
<rect x="149" y="690" width="1" height="1" fill="#000"/>
<rect x="148" y="691" width="1" height="1" fill="#000"/>
<rect x="147" y="692" width="1" height="1" fill="#000"/>
<rect x="146" y="693" width="1" height="1" fill="#000"/>
<rect x="155" y="690" width="1" height="1" fill="#000"/>
<rect x="154" y="691" width="1" height="1" fill="#000"/>
<rect x="153" y="692" width="1" height="1" fill="#000"/>
<rect x="152" y="693" width="1" height="1" fill="#000"/>
<circle cx="184.5" cy="641.5" r="5.6" fill="#000" shape-rendering="auto"/>
<rect x="184" y="641" width="1" height="21" fill="#000"/>
<rect x="175" y="662" width="18" height="1" fill="#000"/>
<rect x="175" y="671" width="18" height="1" fill="#000"/>
<rect x="184" y="671" width="1" height="18" fill="#000"/>
<rect x="179" y="689" width="12" height="1" fill="#000"/>
<rect x="178" y="690" width="1" height="1" fill="#000"/>
<rect x="177" y="691" width="1" height="1" fill="#000"/>
<rect x="176" y="692" width="1" height="1" fill="#000"/>
<rect x="175" y="693" width="1" height="1" fill="#000"/>
<rect x="184" y="690" width="1" height="1" fill="#000"/>
<rect x="183" y="691" width="1" height="1" fill="#000"/>
<rect x="182" y="692" width="1" height="1" fill="#000"/>
<rect x="181" y="693" width="1" height="1" fill="#000"/>
<rect x="190" y="690" width="1" height="1" fill="#000"/>
<rect x="189" y="691" width="1" height="1" fill="#000"/>
<rect x="188" y="692" width="1" height="1" fill="#000"/>
<rect x="187" y="693" width="1" height="1" fill="#000"/>
<circle cx="267.5" cy="641.5" r="5.6" fill="#000" shape-rendering="auto"/>
<rect x="267" y="641" width="1" height="21" fill="#000"/>
<rect x="258" y="662" width="18" height="1" fill="#000"/>
<rect x="258" y="671" width="18" height="1" fill="#000"/>
<rect x="267" y="671" width="1" height="18" fill="#000"/>
<rect x="262" y="689" width="12" height="1" fill="#000"/>
<rect x="261" y="690" width="1" height="1" fill="#000"/>
<rect x="260" y="691" width="1" height="1" fill="#000"/>
<rect x="259" y="692" width="1" height="1" fill="#000"/>
<rect x="258" y="693" width="1" height="1" fill="#000"/>
<rect x="267" y="690" width="1" height="1" fill="#000"/>
<rect x="266" y="691" width="1" height="1" fill="#000"/>
<rect x="265" y="692" width="1" height="1" fill="#000"/>
<rect x="264" y="693" width="1" height="1" fill="#000"/>
<rect x="273" y="690" width="1" height="1" fill="#000"/>
<rect x="272" y="691" width="1" height="1" fill="#000"/>
<rect x="271" y="692" width="1" height="1" fill="#000"/>
<rect x="270" y="693" width="1" height="1" fill="#000"/>
<circle cx="305.5" cy="641.5" r="5.6" fill="#000" shape-rendering="auto"/>
<rect x="305" y="641" width="1" height="21" fill="#000"/>
<rect x="296" y="662" width="18" height="1" fill="#000"/>
<rect x="296" y="671" width="18" height="1" fill="#000"/>
<rect x="305" y="671" width="1" height="18" fill="#000"/>
<rect x="300" y="689" width="12" height="1" fill="#000"/>
<rect x="299" y="690" width="1" height="1" fill="#000"/>
<rect x="298" y="691" width="1" height="1" fill="#000"/>
<rect x="297" y="692" width="1" height="1" fill="#000"/>
<rect x="296" y="693" width="1" height="1" fill="#000"/>
<rect x="305" y="690" width="1" height="1" fill="#000"/>
<rect x="304" y="691" width="1" height="1" fill="#000"/>
<rect x="303" y="692" width="1" height="1" fill="#000"/>
<rect x="302" y="693" width="1" height="1" fill="#000"/>
<rect x="311" y="690" width="1" height="1" fill="#000"/>
<rect x="310" y="691" width="1" height="1" fill="#000"/>
<rect x="309" y="692" width="1" height="1" fill="#000"/>
<rect x="308" y="693" width="1" height="1" fill="#000"/>
<circle cx="385.5" cy="641.5" r="5.6" fill="#000" shape-rendering="auto"/>
<rect x="385" y="641" width="1" height="21" fill="#000"/>
<rect x="376" y="662" width="18" height="1" fill="#000"/>
<rect x="376" y="671" width="18" height="1" fill="#000"/>
<rect x="385" y="671" width="1" height="18" fill="#000"/>
<rect x="380" y="689" width="12" height="1" fill="#000"/>
<rect x="379" y="690" width="1" height="1" fill="#000"/>
<rect x="378" y="691" width="1" height="1" fill="#000"/>
<rect x="377" y="692" width="1" height="1" fill="#000"/>
<rect x="376" y="693" width="1" height="1" fill="#000"/>
<rect x="385" y="690" width="1" height="1" fill="#000"/>
<rect x="384" y="691" width="1" height="1" fill="#000"/>
<rect x="383" y="692" width="1" height="1" fill="#000"/>
<rect x="382" y="693" width="1" height="1" fill="#000"/>
<rect x="391" y="690" width="1" height="1" fill="#000"/>
<rect x="390" y="691" width="1" height="1" fill="#000"/>
<rect x="389" y="692" width="1" height="1" fill="#000"/>
<rect x="388" y="693" width="1" height="1" fill="#000"/>
</svg>
<div class="t rg" style="left:89.91px;top:614.00px;font-size:13.25px;font-weight:bold;color:#000;transform:scaleX(0.9828);">226 nH</div>
<div class="t rg" style="left:208.35px;top:613.00px;font-size:13.25px;font-weight:bold;color:#000;transform:scaleX(0.8950);">249 nH</div>
<div class="t rg" style="left:331.05px;top:613.00px;font-size:13.25px;font-weight:bold;color:#000;transform:scaleX(0.8997);">226 nH</div>
<div class="t rg" style="left:15.80px;top:660.00px;font-size:13.25px;font-weight:bold;color:#000;transform:scaleX(0.9933);">75 pF</div>
<div class="t rg" style="left:406.91px;top:662.00px;font-size:13.25px;font-weight:bold;color:#000;transform:scaleX(0.9844);">75 pF</div>
<div class="t rg" style="left:149.81px;top:706.00px;font-size:13.25px;font-weight:bold;color:#000;transform:scaleX(0.9844);">68 pF</div>
<div class="t rg" style="left:150.19px;top:721.00px;font-size:13.25px;font-weight:bold;color:#000;transform:scaleX(0.8768);">X2</div>
<div class="t rg" style="left:273.71px;top:711.00px;font-size:13.25px;font-weight:bold;color:#000;transform:scaleX(0.9844);">68 pF</div>
<div class="t rg" style="left:274.09px;top:726.00px;font-size:13.25px;font-weight:bold;color:#000;transform:scaleX(0.8832);">X2</div>
</body></html>
